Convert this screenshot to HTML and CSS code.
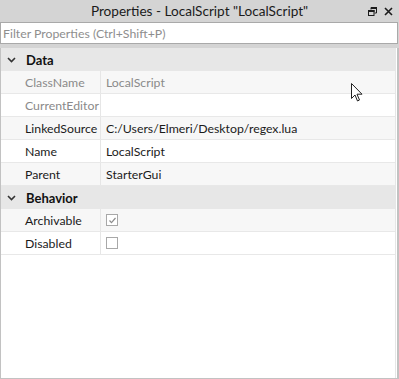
FILE: index.html
```html
<!DOCTYPE html>
<html lang="en">
<head>
    <meta charset="UTF-8">
    <meta name="viewport" content="width=device-width, initial-scale=1.0">
    <title>Properties - LocalScript "LocalScript"</title>
    <link rel="stylesheet" href="styles.css">
</head>
<body>

    <div class="window">
        <div class="titlebar">
            <span></span>
            <span class="title">Properties - LocalScript "LocalScript"</span>
            <div class="title-btns">
                <svg width="9" height="9" viewBox="0 0 9 9">
                    <path d="M3 0.5h5.5v5.5h-2M3 2.5v-2" fill="none" stroke="#1b1b1b" stroke-width="1"/>
                    <rect x="3" y="0" width="6" height="2" fill="#1b1b1b"/>
                    <rect x="0.5" y="3.5" width="5.5" height="5" fill="none" stroke="#1b1b1b" stroke-width="1"/>
                    <rect x="0" y="3" width="6.5" height="2" fill="#1b1b1b"/>
                </svg>
                <svg width="9" height="9" viewBox="0 0 9 9">
                    <path d="M1 1L8 8M8 1L1 8" stroke="#1b1b1b" stroke-width="1.6"/>
                </svg>
            </div>
        </div>

        <div class="filter">
            <input type="text" placeholder="Filter Properties (Ctrl+Shift+P)">
        </div>

        <div class="panel">
            <div class="grid">
                <div class="category">
                    <svg width="9" height="6" viewBox="0 0 9 6"><path d="M1 1l3.5 3.5L8 1" fill="none" stroke="#333" stroke-width="1.6"/></svg>
                    <span>Data</span>
                </div>
                <div class="row alt readonly"><div class="name">ClassName</div><div class="value">LocalScript</div></div>
                <div class="row readonly"><div class="name">CurrentEditor</div><div class="value"></div></div>
                <div class="row alt"><div class="name">LinkedSource</div><div class="value">C:/Users/Elmeri/Desktop/regex.lua</div></div>
                <div class="row"><div class="name">Name</div><div class="value">LocalScript</div></div>
                <div class="row alt"><div class="name">Parent</div><div class="value">StarterGui</div></div>

                <div class="category">
                    <svg width="9" height="6" viewBox="0 0 9 6"><path d="M1 1l3.5 3.5L8 1" fill="none" stroke="#333" stroke-width="1.6"/></svg>
                    <span>Behavior</span>
                </div>
                <div class="row alt">
                    <div class="name">Archivable</div>
                    <div class="value">
                        <span class="check">
                            <svg width="9" height="9" viewBox="0 0 9 9"><path d="M1.5 4.5l2 2.2L7.5 2" fill="none" stroke="#8c8c8c" stroke-width="1.2"/></svg>
                        </span>
                    </div>
                </div>
                <div class="row">
                    <div class="name">Disabled</div>
                    <div class="value"><span class="check"></span></div>
                </div>
            </div>
        </div>

        <svg class="cursor" width="12" height="19" viewBox="0 0 12 19">
            <path d="M0.5 0.5v15l3.5-3.5 2.5 6 2-1-2.5-5.8h5z" fill="#fff" stroke="#222" stroke-width="1"/>
        </svg>
    </div>

</body>
</html>
```

FILE: styles.css
```css
* {
    box-sizing: border-box;
}
body {
    margin: 0;
    font-family: Lato, "Noto Sans", sans-serif;
    font-size: 12.3px;
    color: #1b1b1b;
}
.window {
    position: relative;
    width: 399px;
    height: 379px;
    background-color: #d4d4d4;
    display: flex;
    flex-direction: column;
}
.titlebar {
    height: 22px;
    display: grid;
    grid-template-columns: 40px 1fr 40px;
    align-items: center;
}
.title {
    text-align: center;
    white-space: nowrap;
    font-size: 13.6px;
}
.title-btns {
    display: flex;
    justify-content: flex-end;
    align-items: center;
    gap: 7px;
    padding-right: 6px;
}
.filter {
    height: 22px;
    margin: 0 1px 0 0;
}
.filter input {
    width: 100%;
    height: 100%;
    border: 1px solid #a9a9a9;
    background: #fff;
    font: inherit;
    padding: 0 2px;
    outline: none;
}
.filter input::placeholder {
    color: #8e8e8e;
}
.panel {
    flex: 1;
    margin-top: 4px;
    background: #fff;
    border-left: 1px solid #c2c2c2;
    border-right: 2px solid #c2c2c2;
    border-bottom: 1px solid #c2c2c2;
    padding-right: 1px;
    display: flex;
}
.grid {
    flex: 1;
    border-right: 1px solid #e6e6e6;
}
.category {
    height: 23px;
    background: #e7e7e7;
    display: flex;
    align-items: center;
    font-weight: bold;
    font-size: 13px;
    color: #111;
}
.category svg {
    margin: 0 10px 0 6px;
}
.row {
    height: 23px;
    display: flex;
    border-bottom: 1px solid #e8e8e8;
}
.row.alt {
    background: #f7f7f7;
}
.name {
    width: 100px;
    border-right: 1px solid #e6e6e6;
    padding-left: 24px;
    display: flex;
    align-items: center;
}
.value {
    flex: 1;
    padding-left: 5px;
    display: flex;
    align-items: center;
}
.readonly .name,
.readonly .value {
    color: #8a8a8a;
}
.check {
    width: 12px;
    height: 12px;
    border: 1px solid #a8a8a8;
    background: #fff;
    display: flex;
    align-items: center;
    justify-content: center;
}
.cursor {
    position: absolute;
    left: 351px;
    top: 83px;
}
```
